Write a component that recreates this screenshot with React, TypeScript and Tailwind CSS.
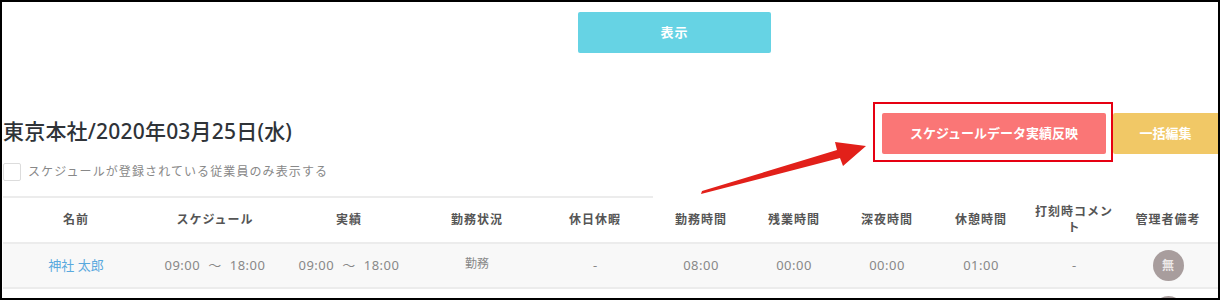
import React from "react";

const cols =
  "grid grid-cols-[146px_132px_136px_120px_116px_96px_90px_96px_92px_94px_94px]";

const headers = [
  "名前",
  "スケジュール",
  "実績",
  "勤務状況",
  "休日休暇",
  "勤務時間",
  "残業時間",
  "深夜時間",
  "休憩時間",
  "打刻時コメント",
  "管理者備考",
];

function TimeRange({ from, to }: { from: string; to: string }) {
  return (
    <span className="tracking-[0.5px]">
      {from}
      <span className="px-[8px]">～</span>
      {to}
    </span>
  );
}

function Badge() {
  return (
    <span className="flex justify-center">
      <span className="flex size-[31px] items-center justify-center rounded-full bg-[#a89d9d] text-[12px] font-bold text-[#ece8e8]">
        無
      </span>
    </span>
  );
}

function Row() {
  return (
    <div
      className={`${cols} h-[45px] items-center border-b-2 border-[#ececec] bg-[#f8f8f8] text-center text-[13px] text-[#888]`}
    >
      <span className="text-[#5aa9de]">神社 太郎</span>
      <TimeRange from="09:00" to="18:00" />
      <TimeRange from="09:00" to="18:00" />
      <span className="-mt-[3px] text-[12px]">勤務</span>
      <span>-</span>
      <span className="tracking-[0.5px]">08:00</span>
      <span className="tracking-[0.5px]">00:00</span>
      <span className="tracking-[0.5px]">00:00</span>
      <span className="tracking-[0.5px]">01:00</span>
      <span>-</span>
      <Badge />
    </div>
  );
}

export default function App() {
  return (
    <div className="relative h-[300px] w-[1220px] overflow-hidden border-2 border-black bg-white font-['Noto_Sans','Noto_Sans_CJK_JP',sans-serif]">
      <div className="pt-[10px]">
        <button className="ml-[576px] flex h-[41px] w-[193px] items-center justify-center rounded-[2px] bg-[#66d3e4] text-[13px] font-bold tracking-[1px] text-white">
          表示
        </button>
      </div>

      <div className="mt-[60px] flex items-start justify-between">
        <div className="ml-[1px] w-[650px] border-b-2 border-[#ececec] pb-[15px] pt-[4px]">
          <h1 className="text-[21px] font-medium leading-[28px] tracking-[0.2px] text-[#2f3338]">
            東京本社/2020年03月25日(水)
          </h1>
          <label className="mt-[18px] flex h-[18px] items-center gap-[7px]">
            <span className="size-[18px] rounded-[2px] border border-[#dcdcdc] bg-white" />
            <span className="text-[12px] tracking-[1.1px] text-[#888]">
              スケジュールが登録されている従業員のみ表示する
            </span>
          </label>
        </div>

        <div className="flex gap-[7px]">
          <div className="relative">
            <button className="flex h-[41px] w-[224px] items-center justify-center rounded-[2px] bg-[#fa7676] text-[13px] font-bold text-white">
              スケジュールデータ実績反映
            </button>
            <span className="absolute -bottom-[8px] -left-[9px] -right-[7px] -top-[11px] border-2 border-[#e60012]" />
          </div>
          <button className="flex h-[41px] w-[105px] items-center justify-center rounded-l-[2px] bg-[#f1c866] text-[13px] font-bold text-white">
            一括編集
          </button>
        </div>
      </div>

      <div className="ml-[1px]">
        <div
          className={`${cols} h-[46px] items-center border-b-2 border-[#ececec] text-center text-[12px] font-bold leading-[16px] tracking-[1px] text-[#555]`}
        >
          {headers.map((h) => (
            <span key={h} className="px-[7px]">
              {h}
            </span>
          ))}
        </div>
        <Row />
        {/* next row: only the top of its note badge shows above the edge */}
        <div className={`${cols} h-[45px] items-center bg-white`}>
          <span className="col-start-11 flex justify-center">
            <span className="size-[31px] rounded-full bg-[#a89d9d]" />
          </span>
        </div>
      </div>

      {/* annotation arrow */}
      <svg
        className="pointer-events-none absolute -left-[2px] -top-[2px]"
        width="1220"
        height="300"
        viewBox="0 0 1220 300"
      >
        <polygon
          points="701,194 840,158 843,166 866,146 835,142 837,150 702,191"
          fill="#e2201a"
        />
      </svg>
    </div>
  );
}
